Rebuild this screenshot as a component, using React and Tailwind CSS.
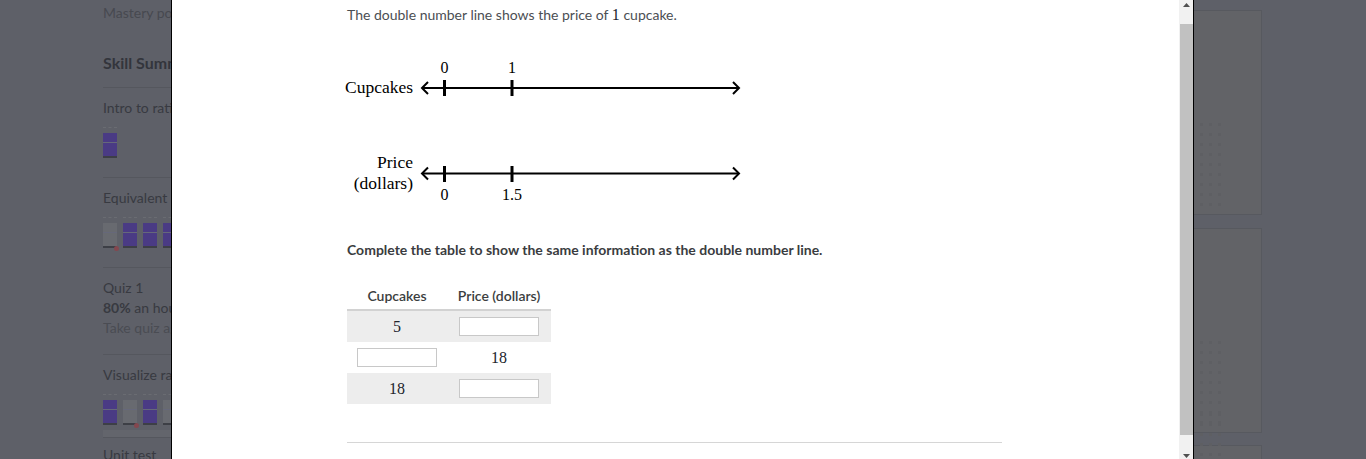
import React from "react";

const serif = { fontFamily: '"Liberation Serif", "Times New Roman", serif' };

function MasteryCell({ kind = "purple", dot = false }) {
  const block = kind === "purple" ? "bg-[#4a3b84]" : "bg-[#686a70]";
  return (
    <div className="relative w-[14px] flex flex-col">
      <div className="h-[3px] border-t border-dashed border-[#6a6c72]" />
      <div className={`mt-[3px] h-[9px] ${block}`} />
      <div className="h-px bg-[#66687a]" />
      <div className={`h-[13px] ${block}`} />
      <div className="h-[2px] bg-[#3d3f46]" />
      {dot && (
        <div className="absolute -right-[2px] bottom-[-3px] h-[5px] w-[5px] rounded-full bg-[#84474f]" />
      )}
    </div>
  );
}

function LeftPanel() {
  return (
    <div className="w-[171px] shrink-0 overflow-hidden">
      <div className="w-[320px] pl-[103px] pt-[3px] text-[14px] leading-[20px] text-[#383a41]">
        <div className="text-[#474950]">Mastery points</div>
        <div className="mt-[29px] text-[16px] leading-[22px] font-bold text-[#33353c]">
          Skill Summary
        </div>
        <div className="mt-[13px] h-px bg-[#55575e]" />
        <div className="mt-[10px]">Intro to ratios</div>
        <div className="mt-[9px] flex gap-[6px]">
          <MasteryCell />
        </div>
        <div className="mt-[19px] h-px bg-[#55575e]" />
        <div className="mt-[10px]">Equivalent ratios</div>
        <div className="mt-[9px] flex gap-[6px]">
          <MasteryCell kind="gray" dot />
          <MasteryCell />
          <MasteryCell />
          <MasteryCell />
        </div>
        <div className="mt-[19px] h-px bg-[#55575e]" />
        <div className="mt-[10px]">Quiz 1</div>
        <div>
          <span className="font-bold">80%</span> an hour ago
        </div>
        <div className="text-[#4a4c53]">Take quiz again</div>
        <div className="mt-[16px] h-px bg-[#55575e]" />
        <div className="mt-[10px]">Visualize ratios</div>
        <div className="mt-[9px] flex gap-[6px]">
          <MasteryCell />
          <MasteryCell kind="gray" dot />
          <MasteryCell />
          <MasteryCell kind="gray" />
        </div>
        <div className="mt-[5px] h-[7px] bg-[#63656c]" />
        <div className="h-px bg-[#55575e]" />
        <div className="mt-[7px]">Unit test</div>
      </div>
    </div>
  );
}

function NumberLines() {
  const line = "#000";
  return (
    <svg width="400" height="160" className="overflow-visible block" style={serif}>
      {/* cupcakes */}
      <line x1="75" y1="38" x2="392" y2="38" stroke={line} strokeWidth="2" />
      <polyline points="81,32 75,38 81,44" fill="none" stroke={line} strokeWidth="2" />
      <polyline points="386,32 392,38 386,44" fill="none" stroke={line} strokeWidth="2" />
      <line x1="97.5" y1="30" x2="97.5" y2="46" stroke={line} strokeWidth="3" />
      <line x1="165" y1="30" x2="165" y2="46" stroke={line} strokeWidth="3" />
      <text x="97.5" y="22.5" textAnchor="middle" fontSize="16">0</text>
      <text x="165" y="22.5" textAnchor="middle" fontSize="16">1</text>
      <text x="66" y="42.5" textAnchor="end" fontSize="17.5">Cupcakes</text>

      {/* price */}
      <line x1="75" y1="123.5" x2="392" y2="123.5" stroke={line} strokeWidth="2" />
      <polyline points="81,117.5 75,123.5 81,129.5" fill="none" stroke={line} strokeWidth="2" />
      <polyline points="386,117.5 392,123.5 386,129.5" fill="none" stroke={line} strokeWidth="2" />
      <line x1="97.5" y1="116" x2="97.5" y2="132" stroke={line} strokeWidth="3" />
      <line x1="165" y1="116" x2="165" y2="132" stroke={line} strokeWidth="3" />
      <text x="66" y="118" textAnchor="end" fontSize="17.5">Price</text>
      <text x="66" y="139" textAnchor="end" fontSize="17.5">(dollars)</text>
      <text x="97.5" y="149.5" textAnchor="middle" fontSize="16">0</text>
      <text x="165" y="149.5" textAnchor="middle" fontSize="16">1.5</text>
    </svg>
  );
}

function Blank() {
  return (
    <input
      type="text"
      readOnly
      className="block h-[19px] w-[80px] border border-[#c8c8c8] bg-white outline-none"
    />
  );
}

function Cell({ children }) {
  return <div className="flex items-center justify-center">{children}</div>;
}

function RatioTable() {
  const rows = [
    { a: "5", b: null, shade: true },
    { a: null, b: "18", shade: false },
    { a: "18", b: null, shade: true },
  ];
  return (
    <div className="w-[204px]">
      <div className="grid h-[30px] grid-cols-[100px_104px] items-center border-b-2 border-[#d2d2d2] text-[14px] font-semibold text-[#3b3e40]">
        <div className="text-center">Cupcakes</div>
        <div className="text-center">Price (dollars)</div>
      </div>
      {rows.map((r, i) => (
        <div
          key={i}
          className={`grid h-[31px] grid-cols-[100px_104px] ${r.shade ? "bg-[#ededed]" : "bg-white"}`}
        >
          <Cell>
            {r.a ? (
              <span className="text-[16px] text-[#21242c]" style={serif}>{r.a}</span>
            ) : (
              <Blank />
            )}
          </Cell>
          <Cell>
            {r.b ? (
              <span className="text-[16px] text-[#21242c]" style={serif}>{r.b}</span>
            ) : (
              <Blank />
            )}
          </Cell>
        </div>
      ))}
    </div>
  );
}

function Scrollbar() {
  return (
    <div className="relative w-[14px] shrink-0 bg-[#f1f1f1]">
      <svg className="absolute left-[4px] top-[3px]" width="7" height="4">
        <polygon points="0,4 3.5,0 7,4" fill="#505050" />
      </svg>
      <div className="absolute left-px right-0 top-[24px] h-[411px] bg-[#c1c1c1]" />
      <svg className="absolute left-[4px] bottom-[1px]" width="7" height="4">
        <polygon points="0,0 7,0 3.5,4" fill="#505050" />
      </svg>
    </div>
  );
}

function BackCard({ top, height }) {
  return (
    <div
      className="relative w-[68px] border-y border-r border-[#57595f] bg-[#626367]"
      style={{ marginTop: top, height }}
    >
      <div className="absolute bottom-[8px] left-[6px] grid grid-cols-3 gap-x-[6px] gap-y-[7px]">
        {Array.from({ length: 27 }).map((_, i) => (
          <div key={i} className="h-[3px] w-[3px] bg-[#5e5f63]" />
        ))}
      </div>
    </div>
  );
}

function RightPanel() {
  return (
    <div className="flex-1 overflow-hidden">
      <BackCard top={10} height={205} />
      <BackCard top={13} height={205} />
      <BackCard top={12} height={60} />
    </div>
  );
}

export default function App() {
  return (
    <div
      className="flex h-[459px] w-[1366px] overflow-hidden bg-[#5e6068]"
      style={{ fontFamily: 'Lato, "Open Sans", sans-serif' }}
    >
      <LeftPanel />
      <div className="w-px shrink-0 bg-black" />
      <main className="w-[1007px] shrink-0 bg-white">
        <div className="ml-[175px] w-[655px] pt-[5px]">
          <p className="text-[14px] leading-[20px] text-[#4b4e53]">
            The double number line shows the price of{" "}
            <span className="text-[16px] text-[#21242c]" style={serif}>1</span> cupcake.
          </p>
          <div className="mt-[25px]">
            <NumberLines />
          </div>
          <p className="mt-[30px] text-[14px] leading-[20px] font-bold text-[#3a3c40]">
            Complete the table to show the same information as the double number line.
          </p>
          <div className="mt-[21px]">
            <RatioTable />
          </div>
          <div className="mt-[38px] h-px bg-[#d6d6d6]" />
        </div>
      </main>
      <Scrollbar />
      <div className="w-px shrink-0 bg-black" />
      <RightPanel />
    </div>
  );
}
